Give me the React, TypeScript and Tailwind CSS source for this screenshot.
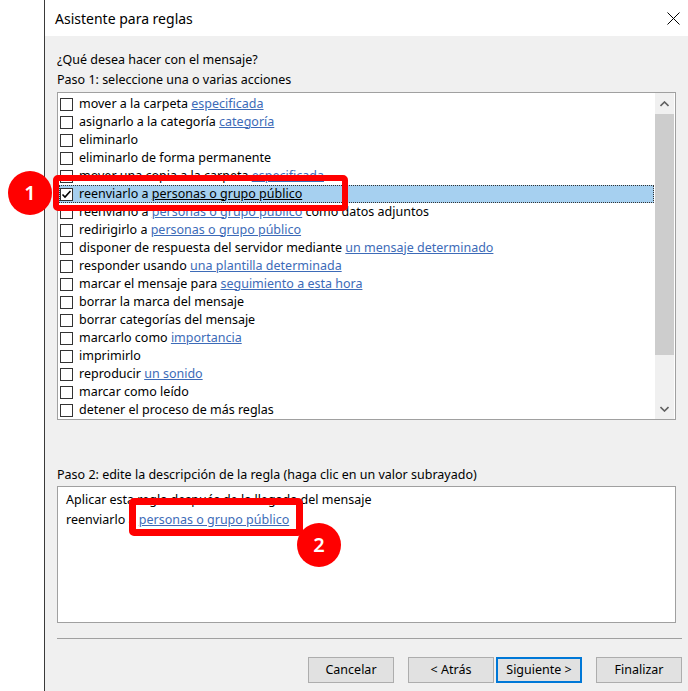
import React from 'react';

type Row = { text: string; link?: string; after?: string; checked?: boolean };

const rows: Row[] = [
  { text: 'mover a la carpeta ', link: 'especificada' },
  { text: 'asignarlo a la categoría ', link: 'categoría' },
  { text: 'eliminarlo' },
  { text: 'eliminarlo de forma permanente' },
  { text: 'mover una copia a la carpeta ', link: 'especificada' },
  { text: 'reenviarlo a ', link: 'personas o grupo público', checked: true },
  { text: 'reenviarlo a ', link: 'personas o grupo público', after: ' como datos adjuntos' },
  { text: 'redirigirlo a ', link: 'personas o grupo público' },
  { text: 'disponer de respuesta del servidor mediante ', link: 'un mensaje determinado' },
  { text: 'responder usando ', link: 'una plantilla determinada' },
  { text: 'marcar el mensaje para ', link: 'seguimiento a esta hora' },
  { text: 'borrar la marca del mensaje' },
  { text: 'borrar categorías del mensaje' },
  { text: 'marcarlo como ', link: 'importancia' },
  { text: 'imprimirlo' },
  { text: 'reproducir ', link: 'un sonido' },
  { text: 'marcar como leído' },
  { text: 'detener el proceso de más reglas' },
];

function Checkbox({ checked }: { checked?: boolean }) {
  return (
    <span className="flex h-[13px] w-[13px] shrink-0 items-center justify-center border border-[#333333] bg-white">
      {checked && (
        <svg width="11" height="11" viewBox="0 0 11 11">
          <path d="M1.5 5.5 L4 8 L9.5 2" fill="none" stroke="#000" strokeWidth="1.6" />
        </svg>
      )}
    </span>
  );
}

function ActionRow({ row }: { row: Row }) {
  const sel = row.checked;
  return (
    <div
      className={
        sel
          ? 'mr-[1px] flex h-[18px] items-center gap-[6px] border border-dotted border-[#333] bg-[#a6d0f0]'
          : 'mr-[1px] flex h-[18px] items-center gap-[6px] border border-transparent'
      }
    >
      <Checkbox checked={row.checked} />
      <span className="whitespace-nowrap">
        {row.text}
        {row.link && (
          <span className={sel ? 'text-black underline' : 'text-[#3d6bb8] underline'}>{row.link}</span>
        )}
        {row.after}
      </span>
    </div>
  );
}

function Chevron({ up }: { up?: boolean }) {
  return (
    <svg width="9" height="6" viewBox="0 0 9 6">
      <path d={up ? 'M0.5 5 L4.5 1 L8.5 5' : 'M0.5 1 L4.5 5 L8.5 1'} fill="none" stroke="#606060" strokeWidth="1.6" />
    </svg>
  );
}

function Btn({ label, primary }: { label: string; primary?: boolean }) {
  return (
    <button
      className={
        primary
          ? 'h-[26px] w-[86px] border-2 border-[#0078d7] bg-[#e1e1e1] text-[12.5px] text-black'
          : 'h-[26px] w-[86px] border border-[#adadad] bg-[#e1e1e1] text-[12.5px] text-black'
      }
    >
      {label}
    </button>
  );
}

function Badge({ n }: { n: string }) {
  return (
    <span className="flex h-[44px] w-[44px] items-center justify-center rounded-full bg-[#ff0000] text-[20px] font-semibold text-white">
      {n}
    </span>
  );
}

export default function App() {
  return (
    <div
      className="relative flex h-[691px] w-[688px] overflow-hidden bg-white text-[12.5px] text-black"
      style={{ fontFamily: '"Segoe UI", "Noto Sans", sans-serif' }}
    >
      <div className="w-[44px] shrink-0 bg-white" />
      <div className="w-px shrink-0 bg-[#3a3a3a]" />
      <div className="flex flex-1 flex-col">
        <div className="flex h-[36px] items-center justify-between bg-white pl-[10px] pr-[8px]">
          <span className="text-[14px]">Asistente para reglas</span>
          <svg width="13" height="13" viewBox="0 0 13 13">
            <path d="M0.5 0.5 L12.5 12.5 M12.5 0.5 L0.5 12.5" stroke="#000" strokeWidth="1" />
          </svg>
        </div>
        <div className="flex flex-1 flex-col bg-[#f0f0f0] pl-[12px] pr-[6px] pt-[14px]">
          <div className="leading-[20px]">¿Qué desea hacer con el mensaje?</div>
          <div className="leading-[20px]">Paso 1: seleccione una o varias acciones</div>
          <div className="mr-[6px] mt-[2px] flex h-[328px] border border-[#a0a0a0] bg-white">
            <div className="flex-1 pl-[1px] pt-[2px]">
              {rows.map((r, i) => (
                <ActionRow key={i} row={r} />
              ))}
            </div>
            <div className="mr-[1px] flex w-[19px] flex-col bg-[#f0f0f0]">
              <div className="flex h-[21px] items-center justify-center">
                <Chevron up />
              </div>
              <div className="h-[241px] bg-[#cdcdcd]" />
              <div className="flex flex-1 items-end justify-center pb-[7px]">
                <Chevron />
              </div>
            </div>
          </div>
          <div className="mt-[45px] leading-[20px]">
            Paso 2: edite la descripción de la regla (haga clic en un valor subrayado)
          </div>
          <div className="mr-[6px] mt-[1px] h-[137px] border border-[#a0a0a0] bg-white pl-[8px] pt-[3px]">
            <div className="leading-[20px]">Aplicar esta regla después de la llegada del mensaje</div>
            <div className="leading-[20px]">
              reenviarlo a <span className="text-[#3d6bb8] underline">personas o grupo público</span>
            </div>
          </div>
          <div className="mt-[15px] h-px bg-[#a0a0a0]" />
          <div className="mt-[18px] flex justify-end">
            <Btn label="Cancelar" />
            <div className="w-[14px]" />
            <Btn label="< Atrás" />
            <div className="w-[2px]" />
            <Btn label="Siguiente >" primary />
            <div className="w-[14px]" />
            <Btn label="Finalizar" />
          </div>
        </div>
      </div>

      {/* annotations */}
      <div className="absolute left-[53px] top-[175px] h-[36px] w-[295px] rounded-[5px] border-[6px] border-[#ff0000]" />
      <div className="absolute left-[8px] top-[171px]">
        <Badge n="1" />
      </div>
      <div className="absolute left-[129px] top-[498px] h-[38px] w-[174px] rounded-[5px] border-[7px] border-[#ff0000]" />
      <div className="absolute left-[297px] top-[523px]">
        <Badge n="2" />
      </div>
    </div>
  );
}
